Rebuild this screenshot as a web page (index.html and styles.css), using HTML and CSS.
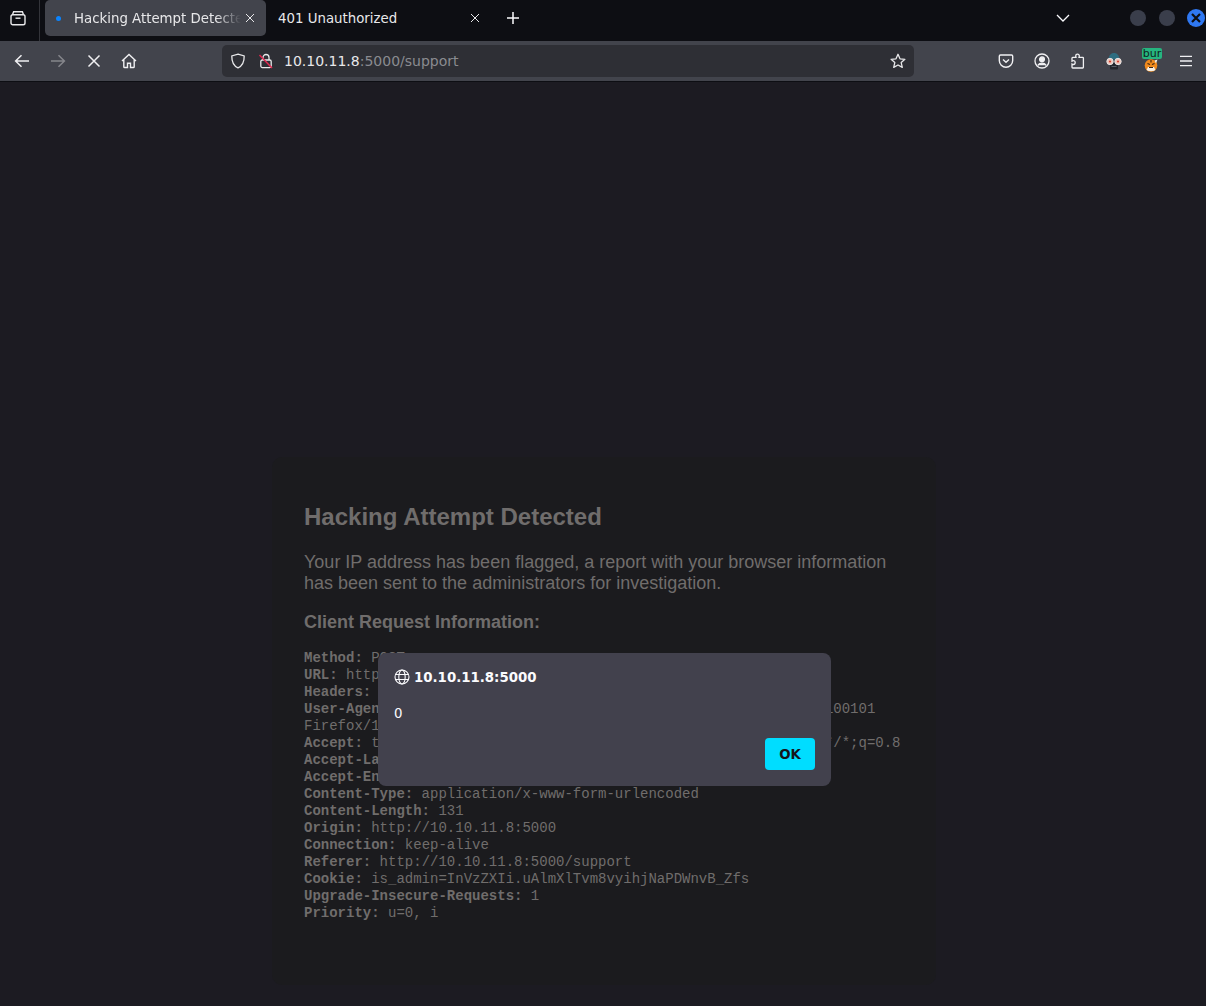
FILE: index.html
```html
<!DOCTYPE html>
<html lang="en">
<head>
    <meta charset="UTF-8">
    <meta name="viewport" content="width=device-width, initial-scale=1.0">
    <title>Hacking Attempt Detected</title>
    <link rel="stylesheet" href="styles.css">
</head>
<body>
    <div class="tabbar">
        <button class="icon-btn tab-list">
            <svg width="16" height="16" viewBox="0 0 16 16" fill="none" stroke="currentColor" stroke-width="1.4"><path d="M2.5 4.7 3.6 1.7h8.8l1.1 3"/><rect x="1" y="4.7" width="14" height="10" rx="1.8"/><path d="M5.5 8.2h5"/></svg>
        </button>
        <div class="tab-sep"></div>
        <div class="tab active">
            <span class="tab-dot"></span>
            <span class="tab-title fade">Hacking Attempt Detected</span>
            <svg class="tab-close" width="10" height="10" viewBox="0 0 10 10" stroke="currentColor" stroke-width="1"><path d="M1 1l8 8M9 1l-8 8"/></svg>
        </div>
        <div class="tab second">
            <span class="tab-title">401 Unauthorized</span>
            <svg class="tab-close" width="10" height="10" viewBox="0 0 10 10" stroke="currentColor" stroke-width="1"><path d="M1 1l8 8M9 1l-8 8"/></svg>
        </div>
        <button class="icon-btn new-tab">
            <svg width="14" height="14" viewBox="0 0 14 14" stroke="currentColor" stroke-width="1.5"><path d="M7 1v12M1 7h12"/></svg>
        </button>
        <div class="spacer"></div>
        <button class="icon-btn tabs-menu">
            <svg width="14" height="8" viewBox="0 0 14 8" fill="none" stroke="currentColor" stroke-width="1.3"><path d="M1 1l6 6 6-6"/></svg>
        </button>
        <div class="win-btns">
            <span class="win-btn"></span>
            <span class="win-btn"></span>
            <span class="win-btn close">
                <svg width="10" height="10" viewBox="0 0 10 10" stroke="#0d0e13" stroke-width="2.2"><path d="M1 1l8 8M9 1l-8 8"/></svg>
            </span>
        </div>
    </div>

    <div class="toolbar">
        <div class="nav-btns">
            <span class="tool-icon">
                <svg width="16" height="14" viewBox="0 0 16 14" fill="none" stroke="currentColor" stroke-width="1.5"><path d="M15 7H2M7.5 1.2 1.6 7l5.9 5.8"/></svg>
            </span>
            <span class="tool-icon dim">
                <svg width="16" height="14" viewBox="0 0 16 14" fill="none" stroke="currentColor" stroke-width="1.5"><path d="M1 7h13M8.5 1.2 14.4 7l-5.900 5.800"/></svg>
            </span>
            <span class="tool-icon">
                <svg width="14" height="14" viewBox="0 0 14 14" stroke="currentColor" stroke-width="1.5"><path d="M1.500 1.500l11 11M12.500 1.500l-11 11"/></svg>
            </span>
            <span class="tool-icon">
                <svg width="16" height="16" viewBox="0 0 16 16" fill="none" stroke="currentColor" stroke-width="1.4"><path d="M1 8 8 1.400 15 8M2.800 6.600v7.100c0 .5.3.8.8.8h2.900v-4.200h3v4.200h2.900c.5 0 .8-.3.8-.8V6.600"/></svg>
            </span>
        </div>
        <div class="urlbar">
            <svg class="url-shield" width="16" height="16" viewBox="0 0 16 16" fill="none" stroke="currentColor" stroke-width="1.300"><path d="M8 1.100 14.200 3c.1 5.500-1.600 9.800-6.200 11.900C3.400 12.800 1.700 8.500 1.800 3z"/></svg>
            <svg class="url-lock" width="16" height="16" viewBox="0 0 16 16" fill="none"><path d="M5 7V4.500a3 3 0 0 1 6 0V7" stroke="#e8e8ea" stroke-width="1.300"/><rect x="2.800" y="7" width="10.400" height="7.600" rx="1.500" stroke="#e8e8ea" stroke-width="1.300"/><path d="M1.500 2 14 15" stroke="#e22850" stroke-width="1.500"/></svg>
            <span class="url-text">10.10.11.8<span class="url-rest">:5000/support</span></span>
            <svg class="url-star" width="16" height="16" viewBox="0 0 16 16" fill="none" stroke="currentColor" stroke-width="1.300" stroke-linejoin="round"><path d="M8 1.300 10 5.800l4.900.5-3.700 3.300 1.100 4.800L8 12l-4.300 2.400 1.100-4.800L1.100 6.300 6 5.800z"/></svg>
        </div>
        <div class="ext-btns">
            <span class="tool-icon">
                <svg width="16" height="16" viewBox="0 0 16 16" fill="none" stroke="currentColor" stroke-width="1.400"><path d="M2.500 2h11c.7 0 1.200.5 1.200 1.200v4.300a6.700 6.700 0 0 1-13.400 0V3.200c0-.7.5-1.200 1.200-1.200z"/><path d="M5 6.500 8 9.300l3-2.800"/></svg>
            </span>
            <span class="tool-icon">
                <svg width="16" height="16" viewBox="0 0 16 16" fill="none" stroke="currentColor" stroke-width="1.300"><circle cx="8" cy="8" r="7"/><circle cx="8" cy="6.300" r="2.400" fill="currentColor"/><path d="M3.800 12.300c1-1.500 2.500-2.100 4.200-2.100s3.200.6 4.200 2.100" fill="currentColor"/></svg>
            </span>
            <span class="tool-icon">
                <svg width="16" height="16" viewBox="0 0 16 16" fill="none" stroke="currentColor" stroke-width="1.300"><path d="M7.500 1.200c-1 0-1.800.8-1.800 1.800 0 .5.200.9.300 1.400H2.700c-.4 0-.7.300-.7.700v3c.4-.2.900-.4 1.400-.4 1 0 1.800.8 1.800 1.900s-.8 1.900-1.800 1.900c-.5 0-1-.2-1.400-.4v3.200c0 .4.300.7.700.7h10c.4 0 .7-.3.700-.7V5.100c0-.4-.3-.7-.7-.7H9c.1-.5.300-.9.300-1.400 0-1-.8-1.800-1.800-1.800z"/></svg>
            </span>
            <span class="tool-icon">
                <svg width="18" height="18" viewBox="0 0 18 18"><path d="M3.500 7.500C3.800 2.500 6.500 1 9 1s5.200 1.500 5.500 6.500z" fill="#2e6d80"/><rect x="5" y="11" width="8" height="6.500" rx="1" fill="#23262c"/><path d="M6.500 14.500h5" stroke="#59606a" stroke-width="1"/><circle cx="5" cy="9.500" r="3.200" fill="#efc4b8" stroke="#e4e4e4" stroke-width="1"/><circle cx="13" cy="9.500" r="3.200" fill="#efc4b8" stroke="#e4e4e4" stroke-width="1"/><circle cx="5" cy="9.500" r="1.100" fill="#d5402f"/><circle cx="13" cy="9.500" r="1.100" fill="#d5402f"/></svg>
            </span>
            <span class="tool-icon burp">
                <svg width="18" height="16" viewBox="0 0 18 16"><circle cx="9" cy="9.500" r="6.300" fill="#f08a1c"/><path d="M4.500 14c2.500 1.600 6.500 1.600 9 0l-1.500-3H6z" fill="#f5f0e6"/><path d="M5.500 7.500l2.500 1M12.500 7.500 10 8.500M9 4v2.500M7 11.500h4" stroke="#3a2412" stroke-width="1.100" fill="none"/><path d="M12.500 4.500l3-1-1.500 4z" fill="#f5f0e6"/></svg>
                <span class="burp-badge">bur</span>
            </span>
            <span class="tool-icon">
                <svg width="14" height="12" viewBox="0 0 14 12" stroke="currentColor" stroke-width="1.300"><path d="M1 1.300h12M1 6h12M1 10.700h12"/></svg>
            </span>
        </div>
    </div>

    <main class="content">
        <div class="card">
            <h1>Hacking Attempt Detected</h1>
            <p>Your IP address has been flagged, a report with your browser information has been sent to the administrators for investigation.</p>
            <h2>Client Request Information:</h2>
<pre class="req"><b>Method:</b> POST
<b>URL:</b> http://10.10.11.8:5000/support
<b>Headers:</b>
<b>User-Agent:</b> Mozilla/5.0 (X11; Linux x86_64; rv:128.0) Gecko/20100101
Firefox/128.0
<b>Accept:</b> text/html,application/xhtml+xml,application/xml;q=0.9,*/*;q=0.8
<b>Accept-Language:</b> en-US,en;q=0.5
<b>Accept-Encoding:</b> gzip, deflate, br
<b>Content-Type:</b> application/x-www-form-urlencoded
<b>Content-Length:</b> 131
<b>Origin:</b> http://10.10.11.8:5000
<b>Connection:</b> keep-alive
<b>Referer:</b> http://10.10.11.8:5000/support
<b>Cookie:</b> is_admin=InVzZXIi.uAlmXlTvm8vyihjNaPDWnvB_Zfs
<b>Upgrade-Insecure-Requests:</b> 1
<b>Priority:</b> u=0, i</pre>
        </div>

        <div class="dialog">
            <div class="dialog-title">
                <svg width="16" height="16" viewBox="0 0 16 16" fill="none" stroke="currentColor" stroke-width="1.100"><circle cx="8" cy="8" r="7"/><ellipse cx="8" cy="8" rx="3.200" ry="7"/><path d="M1.500 5.500h13M1.500 10.500h13"/></svg>
                <span>10.10.11.8:5000</span>
            </div>
            <div class="dialog-body">0</div>
            <div class="dialog-actions">
                <button class="ok-btn">OK</button>
            </div>
        </div>
    </main>
</body>
</html>
```

FILE: styles.css
```css
* {
    box-sizing: border-box;
}
html, body {
    height: 100%;
}
body {
    margin: 0;
    display: flex;
    flex-direction: column;
    overflow: hidden;
    background-color: #1c1b22;
    font-family: "DejaVu Sans", sans-serif;
    color: #fbfbfe;
}
button {
    font-family: inherit;
    border: none;
    background: none;
    color: inherit;
    padding: 0;
}
.icon-btn {
    display: flex;
    align-items: center;
    justify-content: center;
}

/* tab strip */
.tabbar {
    height: 41px;
    flex: none;
    display: flex;
    align-items: flex-start;
    background-color: #0d0e13;
}
.tab-list {
    width: 36px;
    height: 36px;
    color: #e8e8ea;
}
.tab-sep {
    width: 1px;
    height: 41px;
    margin: 0 5px 0 3px;
    background-color: #33343a;
}
.tab {
    width: 221px;
    height: 36px;
    display: flex;
    align-items: center;
    padding: 0 11px 0 12px;
    font-size: 13.33px;
    color: #e8e8ea;
}
.tab.active {
    padding-left: 11px;
    background-color: #42444c;
    border-radius: 5px;
}
.tab.second {
    width: 225px;
}
.tab-dot {
    width: 5px;
    height: 5px;
    margin: 0 13px 0 0;
    flex: none;
    border-radius: 50%;
    background-color: #0a84ff;
}
.tab-title {
    flex: 1;
    overflow: hidden;
    white-space: nowrap;
}
.tab-title.fade {
    -webkit-mask-image: linear-gradient(to right, #000 85%, transparent);
    mask-image: linear-gradient(to right, #000 85%, transparent);
}
.tab-close {
    flex: none;
    margin-left: 4px;
}
.new-tab {
    width: 36px;
    height: 36px;
    margin-left: 4px;
}
.spacer {
    flex: 1;
}
.tabs-menu {
    width: 36px;
    height: 36px;
    margin-right: 49px;
}
.win-btns {
    display: flex;
    gap: 13px;
    height: 36px;
    align-items: center;
    margin-right: 1px;
}
.win-btn {
    width: 16px;
    height: 16px;
    border-radius: 50%;
    background-color: #3a3e4b;
    display: flex;
    align-items: center;
    justify-content: center;
}
.win-btn.close {
    background-color: #2f78f2;
    width: 18px;
    height: 18px;
    margin-left: -1px;
}

/* nav bar */
.toolbar {
    height: 41px;
    flex: none;
    display: flex;
    align-items: center;
    padding: 0 2px 1px 4px;
    background-color: #42444c;
    border-bottom: 1px solid #0d0e13;
}
.nav-btns, .ext-btns {
    display: flex;
    align-items: center;
}
.tool-icon {
    width: 36px;
    height: 32px;
    display: flex;
    align-items: center;
    justify-content: center;
    color: #f0f0f2;
    position: relative;
}
.tool-icon.dim {
    color: #85868b;
}
.nav-btns .tool-icon:last-child {
    width: 34px;
}
.urlbar {
    width: 692px;
    height: 32px;
    margin: 0 74px 0 76px;
    padding: 0 8px;
    display: flex;
    align-items: center;
    border-radius: 5px;
    background-color: #2e2f35;
    font-size: 14px;
    color: #e8e8ea;
}
.url-lock {
    margin: 0 10px 0 12px;
}
.url-text {
    flex: 1;
    white-space: nowrap;
}
.url-rest {
    color: #8a8b90;
}
.burp-badge {
    position: absolute;
    top: 3px;
    left: 10px;
    width: 20px;
    height: 11px;
    border-radius: 2px;
    background-color: #26b57f;
    color: #10241c;
    font-size: 11px;
    line-height: 11px;
    text-align: center;
}
.burp svg {
    margin-top: 7px;
    margin-left: 1px;
}

/* page */
.content {
    flex: 1;
    position: relative;
    padding-top: 375px;
    overflow: hidden;
}
.card {
    width: 664px;
    height: 528px;
    margin-left: 272px;
    padding: 32px;
    border-radius: 10px;
    background-color: #1b1b1e;
    font-family: "Liberation Sans", Arial, sans-serif;
    color: #706d6c;
}
.card h1 {
    margin: 14px 0 0;
    font-size: 24px;
    line-height: 28px;
}
.card p {
    margin: 21px 0 0;
    font-size: 18px;
    line-height: 21px;
}
.card h2 {
    margin: 18px 0 0;
    font-size: 18px;
    line-height: 21px;
}
.req {
    margin: 17px 0 0;
    font-family: "Liberation Mono", monospace;
    font-size: 14px;
    line-height: 17px;
}

/* alert */
.dialog {
    position: absolute;
    left: 378px;
    top: 571px;
    width: 453px;
    height: 133px;
    padding: 14px 16px 16px;
    border-radius: 8px;
    background-color: #42414d;
    font-size: 13.33px;
}
.dialog-title {
    display: flex;
    align-items: center;
    gap: 4px;
    height: 20px;
    font-weight: 700;
}
.dialog-body {
    margin-top: 17px;
    line-height: 20px;
}
.dialog-actions {
    display: flex;
    justify-content: flex-end;
    margin-top: 14px;
}
.ok-btn {
    width: 50px;
    height: 32px;
    border-radius: 4px;
    background-color: #00ddff;
    color: #15141a;
    font-size: 13.33px;
    font-weight: 700;
}
```
